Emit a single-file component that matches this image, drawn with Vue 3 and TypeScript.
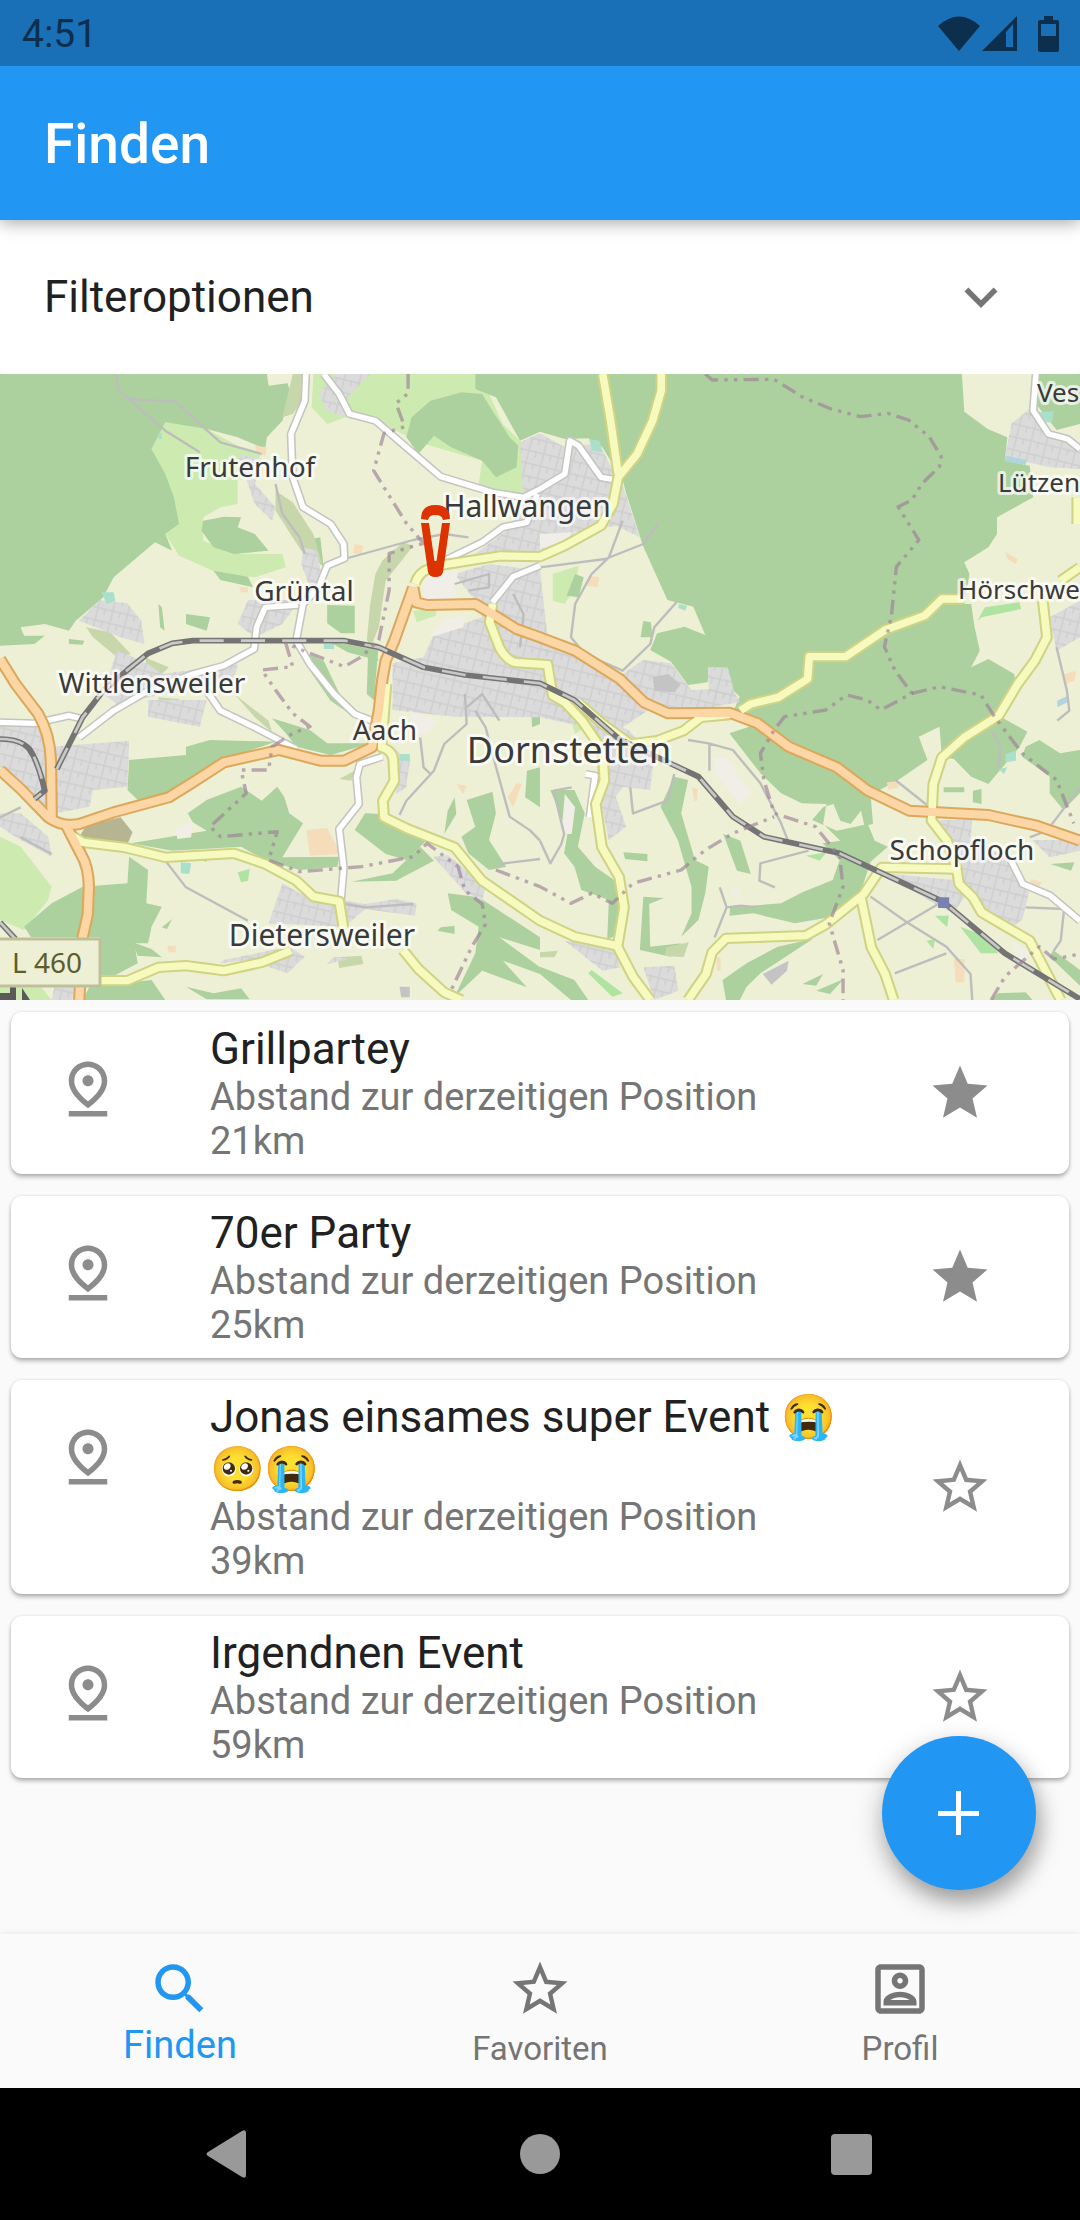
<script setup lang="ts">
import { ref } from 'vue'

interface EventItem {
  title: string
  distance: number
  favorite: boolean
}

interface Place {
  name: string
  x: number
  y: number
  size: number
  anchor: 'start' | 'middle'
}

const events = ref<EventItem[]>([
  { title: 'Grillpartey', distance: 21, favorite: true },
  { title: '70er Party', distance: 25, favorite: true },
  { title: 'Jonas einsames super Event 😭🥺😭', distance: 39, favorite: false },
  { title: 'Irgendnen Event', distance: 59, favorite: false },
])

const icons = {
  search:
    'M15.5 14h-.79l-.28-.27C15.41 12.59 16 11.11 16 9.5 16 5.91 13.09 3 9.5 3S3 5.91 3 9.5 5.91 16 9.5 16c1.61 0 3.09-.59 4.23-1.57l.27.28v.79l5 4.99L20.49 19l-4.99-5zm-6 0C7.01 14 5 11.99 5 9.5S7.01 5 9.5 5 14 7.01 14 9.5 11.99 14 9.5 14z',
  star: 'M12 17.27L18.18 21l-1.64-7.03L22 9.24l-7.19-.61L12 2 9.19 8.63 2 9.24l5.46 4.73L5.82 21z',
  starOutline:
    'M22 9.24l-7.19-.62L12 2 9.19 8.63 2 9.24l5.46 4.73L5.82 21 12 17.27 18.18 21l-1.63-7.03L22 9.24zM12 15.4l-3.76 2.27 1-4.28-3.32-2.88 4.38-.38L12 6.1l1.71 4.04 4.38.38-3.32 2.88 1 4.28L12 15.4z',
  account:
    'M19 3H5c-1.11 0-2 .9-2 2v14c0 1.1.89 2 2 2h14c1.1 0 2-.9 2-2V5c0-1.1-.9-2-2-2zm0 16H5V5h14v14zM12 12c1.65 0 3-1.35 3-3s-1.35-3-3-3-3 1.35-3 3 1.35 3 3 3zm0-4c.55 0 1 .45 1 1s-.45 1-1 1-1-.45-1-1 .45-1 1-1zm6 8.58c0-2.5-3.97-3.58-6-3.58s-6 1.08-6 3.58V18h12v-1.42zM8.48 16c.74-.51 2.23-1 3.52-1s2.78.49 3.52 1H8.48z',
  pinDrop:
    'M12 4c1.93 0 5 1.4 5 5.15 0 2.16-1.72 4.67-5 7.32-3.28-2.65-5-5.17-5-7.32C7 5.4 10.07 4 12 4m0-2C8.73 2 5 4.46 5 9.15c0 3.12 2.33 6.41 7 9.85 4.67-3.44 7-6.73 7-9.85C19 4.46 15.27 2 12 2zM12 7c-1.1 0-2 .9-2 2s.9 2 2 2 2-.9 2-2-.9-2-2-2zM5 20h14v2H5z',
}

const tabs = [
  { label: 'Finden', icon: icons.search, active: true },
  { label: 'Favoriten', icon: icons.starOutline, active: false },
  { label: 'Profil', icon: icons.account, active: false },
]

const places: Place[] = [
  { name: 'Frutenhof', x: 250, y: 103, size: 28, anchor: 'middle' },
  { name: 'Hallwangen', x: 527, y: 143, size: 30, anchor: 'middle' },
  { name: 'Grüntal', x: 304, y: 227, size: 28, anchor: 'middle' },
  { name: 'Wittlensweiler', x: 152, y: 319, size: 28, anchor: 'middle' },
  { name: 'Aach', x: 385, y: 366, size: 28, anchor: 'middle' },
  { name: 'Dornstetten', x: 569, y: 389, size: 36, anchor: 'middle' },
  { name: 'Dietersweiler', x: 322, y: 572, size: 30, anchor: 'middle' },
  { name: 'Schopfloch', x: 962, y: 486, size: 28, anchor: 'middle' },
  { name: 'Hörschwe', x: 958, y: 225, size: 26, anchor: 'start' },
  { name: 'Lützen', x: 998, y: 118, size: 26, anchor: 'start' },
  { name: 'Ves', x: 1037, y: 28, size: 26, anchor: 'start' },
]

/* Land cover outlines, in terrain units */
const meadow = [
  'M480 145L600 165 690 215 760 235 740 280 690 320 690 390 640 400 590 430 590 500 700 540 820 540 830 580 740 610 640 600 520 545 480 480 520 450 500 370 440 225Z',
  'M905 100L910 0H1380V40L1420 60 1460 150 1510 200 1540 310 1560 350 1500 365 1390 330 1400 260 1200 200 1180 185 1090 140 1015 125 950 150Z',
  'M0 1388L60 1418 150 1538 140 1578 70 1668 0 1638Z',
  'M1200 710L1270 700 1265 725 1210 745ZM1330 760L1350 750 1365 790 1335 800ZM1415 835L1440 830 1475 895 1440 890Z',
  'M0 1040L40 1060 90 1065 90 1090 0 1090ZM0 1840L120 1840 150 1878H0Z',
  'M940 1628H990V1655L950 1660Z',
  'M1605 600L1680 575 1670 640 1640 690 1605 680Z',
  'M1655 1030L1680 1010 1700 1060 1670 1080Z',
]

const scrub = [
  'M850 0H900L880 80 850 120 820 130Z',
  'M800 350L850 385 910 480 935 570 875 530 800 410Z',
  'M250 760L320 775 380 840 340 850 270 790ZM420 850L490 880 470 900 430 885Z',
  'M1090 600L1110 560 1170 505 1200 515 1120 620 1100 760 1080 810 1065 800 1075 690Z',
  'M460 970L520 975 520 1005 465 1000ZM980 1750L1050 1745 1055 1770 985 1782Z',
  'M680 960L780 1040 790 1075 740 1030ZM985 1215L1030 1190 1020 1220Z',
  'M1935 1720L2000 1705 1985 1750 1930 1745ZM1568 1735L1620 1730 1610 1750 1568 1750Z',
]

const forest = [
  'M0 0H775L780 35 835 28 845 60 820 140 775 190 770 225 690 190 600 165 480 145 440 225 480 300 505 370 520 450 480 480 500 530 450 505 330 610 300 670 220 740 200 770 130 750 60 760 70 785 130 785 100 810 0 815Z',
  'M590 440L650 428 700 430 690 460 740 480 780 530 680 540 620 520 585 470Z',
  'M1195 130L1250 80 1340 55 1400 60 1430 110 1480 190 1505 215 1500 280 1440 310 1400 260 1310 220 1260 185 1215 240 1180 190Z',
  'M1380 0H2793L2800 113 2868 165 2925 190 2918 260 2990 275 3000 370 2895 430 2895 480 2870 520 2800 565 2815 600 2800 690 2820 690 2830 760 2845 830 2820 880 2870 855 2945 900 2950 930 2900 1025 2983 1073 2960 1120 2870 1230 2820 1208 2770 1155 2735 1150 2728 1058 2668 1088 2693 1158 2608 1218 2528 1263 2420 1170 2290 1118 2200 1048 2130 1010 2148 968 2128 948 2113 883 2058 883 2055 925 1998 933 1948 863 1888 828 1908 778 1988 758 2048 783 2013 698 1938 678 1868 518 1818 358 1808 318 1748 218 1708 193 1640 195 1568 173 1510 200 1440 70 1380 45Z',
  'M2118 1078L2200 1050 2290 1128 2430 1185 2528 1263 2535 1350 2510 1355 2500 1310 2470 1350 2440 1340 2420 1290 2390 1300 2358 1338 2430 1370 2520 1350 2540 1400 2578 1418 2528 1463 2498 1558 2418 1628 2308 1648 2188 1618 2118 1625 2120 1600 2268 1588 2330 1555 2418 1518 2438 1458 2388 1408 2440 1400 2390 1350 2400 1290 2328 1288 2268 1258 2208 1198Z',
  'M540 1118L610 1098 800 1103 650 1158 560 1218 490 1263 400 1278 370 1248 375 1158 540 1143Z',
  'M545 1318L600 1278 700 1238 760 1280 805 1238 825 1268 840 1318 880 1348 820 1450 985 1448 980 1478 870 1488 770 1458 700 1418 500 1430 380 1408 600 1370 560 1345Z',
  'M375 1448L430 1488 425 1588 470 1598 440 1658 430 1708 390 1708 400 1768 290 1828V1690H90L70 1658 150 1588 240 1538 370 1528Z',
  'M1030 1368L1060 1318 1110 1320 1160 1358 1240 1398 1180 1458 1120 1440Z',
  'M1020 1523L1140 1498 1220 1418 1260 1460 1150 1520Z',
  'M1355 1278L1430 1253 1440 1318 1420 1398 1470 1478 1420 1488 1360 1438 1340 1388 1380 1358Z',
  'M1300 1558L1390 1570 1450 1610 1568 1690V1728L1450 1690 1568 1780V1800L1460 1760 1530 1840 1400 1790 1320 1868 1380 1738 1390 1658 1310 1608Z',
  'M790 1033L900 1068 950 1108 1080 1108 960 1143 860 1118 830 1078Z',
  'M260 1838L440 1818 480 1878H240ZM540 1838L620 1858 700 1843 725 1876H600ZM385 1705L440 1725 470 1750 400 1745Z',
  'M950 693L1030 695V778L990 778 950 748Z',
  'M620 590L720 608 735 640 640 618ZM540 720L610 730 600 770 540 750ZM460 690L470 700 478 770 465 760ZM200 795L245 800 240 812 200 810Z',
  'M870 830L940 860 1000 990 1060 1030 1030 1030 960 980 900 890ZM1070 800L1100 810 1090 930 1110 1000 1065 960Z',
  'M880 500L930 490 940 580 900 540ZM950 800L1080 825 1100 860 1010 835Z',
  'M1598 1248L1668 1248 1698 1318 1678 1418 1728 1478 1783 1518 1800 1600 1798 1678 1763 1698 1768 1578 1688 1548 1668 1478 1638 1438 1648 1378Z',
  'M1958 1208L1998 1218 1978 1318 2018 1458 2058 1478 2048 1558 2028 1638 1978 1688 2008 1618 2008 1538 1968 1398 1918 1298Z',
  'M1868 1568L1928 1572 1885 1590 1888 1718 1978 1708 1948 1748 1858 1728Z',
  'M1810 1435L1880 1440V1462L1815 1455Z',
  'M2108 1878L2098 1818 2168 1768 2258 1718 2360 1695 2208 1798 2168 1838 2148 1878Z',
  'M2978 1118L3018 1098 3078 1138 3136 1128V1258L3088 1308 3048 1258V1208L2968 1148Z',
  'M3058 1728L3136 1788V1835L3048 1748ZM2898 1858L2978 1855 2998 1878H2878Z',
  'M1568 1778L1668 1818 1708 1878H1658L1568 1800ZM1540 960L1568 970V1050L1545 1060ZM1530 1190L1568 1180V1300L1525 1270Z',
  'M3008 0H3136V150L3068 168 3008 90ZM1868 740L1890 745 1895 790 1860 790ZM1670 600L1695 610 1680 670 1645 665Z',
  'M2100 1380L2150 1400 2180 1500 2140 1490ZM2740 1240H2800V1255H2740ZM2825 1250L2850 1245V1290L2825 1285ZM3050 1470L3120 1465 3110 1490Z',
  'M2330 1830L2390 1800 2370 1835ZM2370 1850L2450 1815 2410 1860ZM1280 1660L1320 1655 1320 1680 1270 1670ZM470 1660L500 1635 485 1665ZM1320 1270L1325 1320 1290 1380 1300 1310Z',
]

const park = [
  'M1718 1788L1808 1858 1778 1868 1708 1798ZM2788 1658L2868 1688 2898 1738 2848 1738ZM2715 1625L2755 1625 2750 1660ZM2690 1700L2715 1695 2710 1725Z',
  'M2860 700L2960 685 2965 705 2850 730 2838 740ZM690 1495L725 1485 720 1520 700 1525ZM2340 1445L2400 1435 2380 1460Z',
]

const town = [
  'M975 0H1075L1010 70 1000 130 950 110 925 60Z',
  'M690 240L760 255 740 330 800 400 790 440 740 390Z',
  'M880 520L920 530 940 640 900 640 875 570ZM720 678L870 678 820 750 740 790 690 750Z',
  'M290 678L370 688 410 740 420 810 350 790 230 740Z',
  'M340 828L430 870 470 900 690 870 680 920 430 970 340 990 300 960ZM430 978H600L580 1058 430 1028Z',
  'M0 1060L110 1048 150 1118 375 1100 370 1238 270 1248 260 1298 160 1318 100 1268 0 1178Z',
  'M0 1318H60L140 1388 150 1448 60 1398 0 1358Z',
  'M1320 600L1420 570 1568 590 1600 880 1700 1060 1568 1030 1320 1028 1140 1008 1140 868 1230 850 1260 780 1400 730 1380 680Z',
  'M1510 205L1568 178 1640 220 1740 208 1780 290 1810 340 1838 430 1858 490 1790 455 1668 475 1660 490 1568 530 1380 540 1470 470 1520 390Z',
  'M1568 790L1668 820 1808 900 1868 858 1948 868 2008 948 2128 945 2148 985 1980 1015 1898 998 1808 1060 1828 1070 1898 1158 1888 1248 1808 1238 1788 1268 1818 1358 1768 1398 1738 1248 1728 1080 1600 1000Z',
  'M2055 880H2113L2135 965 2060 980Z',
  'M820 1528L870 1558 1060 1590 1150 1575 1210 1588 1205 1625 1060 1605 1000 1658 780 1648Z',
  'M650 1758L840 1718 885 1748 835 1798 720 1758 640 1768ZM970 1748L1010 1755 950 1770Z',
  'M2718 1338H2823L2818 1398 2938 1458 2968 1518 2988 1558 2968 1638 2938 1658 2848 1608 2808 1558 2768 1618 2728 1598 2568 1498 2768 1518Z',
  'M2998 1398H3136V1430L3048 1450Z',
  'M2938 148L2998 98 3048 178 3136 210V285L3048 280 2918 250Z',
  'M3048 730L3136 680V790L3068 830Z',
  'M1258 1448L1300 1443 1410 1538 1400 1580 1350 1555Z',
  'M1140 1120L1190 1160 1180 1240 1150 1260ZM1868 1780L1958 1775 1970 1850 1900 1878Z',
  'M1640 1700L1790 1725 1800 1780 1750 1790ZM160 1830L215 1830 210 1878H150Z',
]

const industry = [
  'M1895 910L1940 900 1975 930 1960 955 1900 950Z',
  'M2215 1800L2290 1760 2285 1790 2240 1832ZM1160 1838H1190V1870H1165Z',
]

const bare = [
  'M1225 600L1330 590 1320 670 1230 680ZM1290 735L1350 725 1345 760 1250 790ZM2068 1155L2110 1150 2180 1260 2150 1290 2080 1200Z',
  'M510 1365L560 1345 555 1390 515 1395ZM1640 1260L1670 1300 1660 1380 1630 1380ZM2120 1540L2150 1545 2140 1580ZM2940 1700L2990 1740 2960 1770ZM1568 480L1660 475 1650 500 1568 525ZM1190 1010L1270 1040 1240 1080 1200 1080Z',
]

const farmyard = [
  'M890 1368L950 1362 990 1440 900 1445ZM1500 1228L1515 1230 1490 1300 1475 1270ZM740 215L775 220 770 245 745 235ZM1030 510L1055 515 1050 540 1025 538ZM1710 605L1740 610 1735 640 1705 635Z',
  'M2920 535L2955 555 2950 570 2925 555ZM3090 900L3125 890 3120 920 3095 930ZM2770 1755L2800 1755V1825H2775ZM2575 1225L2605 1222 2610 1240 2580 1248ZM2995 1515L3025 1525 3015 1540 2990 1535ZM485 1715L510 1715 510 1735 490 1735ZM695 640H720V655H700ZM2010 1240L2025 1245 2025 1280 2015 1280ZM1325 1230L1355 1235 1345 1260ZM2080 1750H2092V1790H2082Z',
]

const water = [
  'M295 655L330 655 335 680 310 690ZM525 1465L555 1468 550 1500 525 1498ZM1160 1140H1190V1160H1160ZM1710 195L1740 200 1750 235 1720 230ZM3015 115L3060 112 3055 145 3030 145ZM2920 1140L2950 1130 2950 1160 2920 1165ZM2900 1185L2925 1180 2915 1200Z',
  'M1970 690L1995 695 1990 710 1970 702ZM940 810H970V825H940ZM460 178H470V195H460Z',
]

/* Line work, in terrain units */
const tracks = [
  'M335 0L345 50 480 170 580 235M370 75L510 83 580 150 640 205 760 240M800 330L820 420 870 490 885 540M1000 555L1200 498 1290 480 1360 490',
  'M1808 440L1768 550 1718 600 1670 690 1658 790 1698 840 1808 890 1888 810 1900 760 1968 680M1910 450L1868 510 1758 555 1568 580',
  'M480 1460L540 1540 720 1640M1350 960L1355 1050 1290 1110 1260 1190 1180 1280 1160 1323M1220 1090L1230 1180 1250 1200M1380 1010L1410 1060 1440 1178 1480 1328 1540 1370 1568 1400M1355 1000L1400 960 1450 1040',
  'M1568 1400L1598 1468 1630 1410 1638 1380 1608 1250 1660 1240M1830 1240L1838 1318 1938 1280 1958 1200M1998 1098L2058 1108 2128 1128 2208 1228 2268 1348 2288 1400M2060 1110V1190',
  'M2348 1430L2208 1468 2205 1520 2250 1540M2090 1540L2110 1600 2150 1595 2200 1600M2110 1600L2075 1690M2528 1568L2638 1648 2748 1718 2818 1800 2823 1878M2728 1588L2548 1698M2748 1738L2598 1798',
  'M2978 1600L3090 1605 3080 1700 3060 1730M2600 1218L2700 1300M2880 1070L2905 1120 2900 1180M3068 820L3098 950 3105 1010 3070 1040M3136 1240L3040 1370 2990 1390',
  'M0 1330L60 1300M60 1390L150 1440M1000 1590L1060 1600 1200 1590M1320 630L1420 600 1420 640 1360 650M1490 660L1520 720 1510 820M540 1440L600 1460M1450 1470L1568 1455',
]

const borders = [
  'M2048 0L2068 18 2248 16 2328 68 2408 103 2498 128 2578 118 2638 138 2698 188 2733 248 2728 278 2678 328 2648 378 2608 398 2668 498 2603 578 2588 728 2568 818 2598 888 2648 958 2558 1008 2518 978 2458 963 2398 1008 2278 1028 2248 1068 2208 1138 2218 1218 2248 1318 2368 1358 2438 1448 2448 1538 2408 1648 2448 1788 2448 1878',
  'M2648 958L2728 938 2848 963 2888 1028 2968 1138 3068 1218 3118 1348',
  'M1185 0V58L1150 88 1175 158 1115 178 1085 290 1180 448 1230 508 1130 538V648L1100 798 1050 848 1000 878 900 838 830 808 850 878 760 888 800 948 850 1018 900 1058 850 1078 790 1118 780 1188 700 1188 715 1258 610 1358 640 1388 805 1373 780 1458 870 1493 1050 1478 1200 1448 1240 1408 1330 1478 1350 1550 1400 1590 1410 1650 1370 1718 1310 1848',
  'M1440 1488L1568 1538 1658 1588 1718 1558 1778 1588 1838 1528 1978 1488 2048 1428 2128 1378 2248 1328',
  'M2878 1878L2918 1808 3018 1718 3060 1755 3136 1740',
]

const whiteRoads = [
  'M888 0L885 80 845 180 850 310 880 400 960 450 998 510 1000 553 950 575 925 640 880 690 860 800 900 870 970 960 1030 1020 1080 1040',
  'M940 0L985 60 1015 120 1090 140 1180 220 1280 308 1430 355 1520 370 1568 345 1640 300 1655 200 1680 215 1745 310 1790 318',
  'M865 693L770 700 745 760 738 825 650 875 560 900 430 950 330 1010 230 1090',
  'M0 1045L100 1048 200 1025 240 1035M600 950L640 1010 740 1060 860 1125',
  'M1110 1148L1045 1170 1035 1210 1042 1290 985 1365 998 1480 990 1580',
  'M1290 560L1400 505 1460 460 1530 445 1560 360M1430 685L1490 608 1568 575',
  'M3008 0L3000 110 3045 180 3100 195 3136 225M2935 1458L2970 1530 3050 1565 3136 1640M1700 1200L1728 1205 1712 1330',
]

const yellowRoads = [
  'M1205 630Q1215 595 1245 585L1290 572 1450 546 1568 548 1640 515 1745 455 1780 390 1795 310 1850 240 1895 140 1920 50V0M1750 0L1773 140 1795 300',
  'M1430 690L1422 745 1450 820Q1470 860 1500 866L1590 872 1605 965 1640 985 1690 1040 1750 1130 1755 1220 1730 1290 1748 1420 1798 1510 1812 1600 1793 1718 1838 1808 1888 1878',
  'M1678 985L1750 1050 1830 1110 1908 1100 1985 1070 2035 1030 2120 1022M2150 1010L2180 990 2260 970 2345 915 2350 848H2455L2570 768 2685 725 2735 675H2800',
  'M3080 620L3136 580M3028 680L3040 790 3005 860 2955 930 2900 1025 2800 1090 2735 1150 2710 1230 2705 1340 2750 1400 2778 1485 2785 1530 2825 1570 2850 1615 2990 1700 3080 1878',
  'M2778 1485L2560 1480 2508 1560 2400 1650 2340 1685 2108 1693 2068 1735 2050 1800 1998 1878M2500 1570L2530 1720 2570 1800 2595 1878',
  'M200 1378L240 1405 360 1420 480 1450 680 1438 770 1470 860 1520 910 1568 985 1582 998 1665M290 1820H370L460 1780 540 1775 650 1790 760 1765 845 1730M1170 1728L1215 1785 1290 1855 1340 1878',
  'M1122 930L1108 1120Q1140 1130 1142 1158L1145 1220 1112 1280 1115 1330 1180 1363 1320 1420 1400 1520 1568 1640 1668 1688 1790 1715M3128 370V450',
]

const orangeRoads = [
  'M0 855L45 930 110 1018Q145 1080 148 1160L150 1330',
  'M0 1188L60 1245 140 1330Q180 1360 230 1350L330 1315 490 1270 560 1225 650 1165 810 1128 930 1160H1000L1080 1120 1100 1010 1110 918 1120 860 1145 800 1200 640',
  'M190 1350L235 1440Q258 1480 258 1540L255 1620 240 1690 230 1878',
  'M1200 640L1208 685 1240 693 1380 690 1430 720 1500 765 1568 790 1670 830 1800 915 1870 985 1940 1018 2118 1016 2200 1048 2290 1118 2430 1180 2520 1250 2640 1310 2870 1323 3010 1355 3136 1400',
]

const railway = [
  'M165 1185L240 1030 300 950 370 888 430 838 500 808 560 800H1000L1100 820 1230 880 1350 903 1568 928 1668 978 1798 1095 1950 1170 2028 1208 2128 1328 2218 1388 2438 1438 2738 1583 2918 1738 3136 1875',
  'M0 1095Q60 1095 85 1125 110 1160 130 1250L100 1275M0 1645L45 1695',
]

function toggleFavorite(item: EventItem): void {
  item.favorite = !item.favorite
}
</script>

<template>
  <div class="screen">
    <header class="top">
      <div class="status">
        <span>4:51</span>
        <svg class="status-icons" viewBox="0 0 122 36" aria-hidden="true">
          <path d="M0 10Q21-9 42 10L21 35Z" />
          <path fill-rule="evenodd" d="M44 35L79 0V35ZM68 16L75 8V31H68Z" />
          <path
            fill-rule="evenodd"
            d="M106 0h9v4h4q2 0 2 2v28q0 2-2 2h-17q-2 0-2-2v-28q0-2 2-2h4ZM103 8v12h15V8Z"
          />
        </svg>
      </div>
      <div class="app-bar"><h1>Finden</h1></div>
    </header>

    <main class="content">
      <button class="filter" type="button" aria-expanded="false">
        <span>Filteroptionen</span>
        <svg class="icon" viewBox="0 0 24 24" aria-hidden="true">
          <path d="M16.59 8.59L12 13.17 7.41 8.59 6 10l6 6 6-6z" />
        </svg>
      </button>

      <svg class="map" viewBox="0 0 1080 626" role="img" aria-label="Karte">
        <svg width="1080" height="626" viewBox="0 0 3136 1878" preserveAspectRatio="none">
          <defs>
            <pattern id="streets" width="44" height="38" patternUnits="userSpaceOnUse" patternTransform="rotate(14)">
              <path d="M0 3H44M6 3V38M28 0V20" fill="none" stroke="#cecece" stroke-width="4" />
            </pattern>
          </defs>
          <rect width="3136" height="1878" fill="#edf0d5" />
          <path v-for="d in meadow" :key="d" :d="d" fill="#cdebb0" />
          <path v-for="d in forest" :key="d" :d="d" fill="#add19e" />
          <path v-for="d in scrub" :key="d" :d="d" fill="#c8d7ab" />
          <path v-for="d in park" :key="d" :d="d" fill="#aee3a1" />
          <path v-for="d in town" :key="d" :d="d" fill="#dbdbdb" />
          <path v-for="d in town" :key="'s' + d" :d="d" fill="url(#streets)" />
          <path v-for="d in industry" :key="d" :d="d" fill="#c4c4c4" />
          <path v-for="d in bare" :key="d" :d="d" fill="#f1eee8" />
          <path v-for="d in farmyard" :key="d" :d="d" fill="#f5dcba" />
          <path v-for="d in water" :key="d" :d="d" fill="#aae0cb" />
          <path d="M230 1388L250 1355 350 1330 385 1375 370 1410Z" fill="#b6b592" />
          <path d="M2920 245L2980 258 2978 273 2918 262ZM3070 980L3100 965 3100 985 3070 1000Z" fill="#b0d5df" />

          <g class="line">
            <path v-for="d in tracks" :key="d" :d="d" stroke="#bdbdbd" stroke-width="7" />
            <path v-for="d in whiteRoads" :key="'c' + d" :d="d" stroke="#c4c4c0" stroke-width="25" />
            <path v-for="d in whiteRoads" :key="d" :d="d" stroke="#ffffff" stroke-width="16" />
            <path v-for="d in yellowRoads" :key="'c' + d" :d="d" stroke="#cfd383" stroke-width="34" />
            <path v-for="d in orangeRoads" :key="'c' + d" :d="d" stroke="#dba85c" stroke-width="36" />
            <path v-for="d in yellowRoads" :key="d" :d="d" stroke="#f7fabf" stroke-width="22" />
            <path v-for="d in orangeRoads" :key="d" :d="d" stroke="#fcd6a4" stroke-width="24" />
            <path v-for="d in railway" :key="'c' + d" :d="d" stroke="#747474" stroke-width="17" />
            <path v-for="d in railway" :key="d" :d="d" class="sleepers" />
            <path v-for="d in borders" :key="d" :d="d" class="border" />
          </g>
          <rect x="2724" y="1570" width="32" height="32" fill="#7981b0" />
        </svg>

        <text
          v-for="place in places"
          :key="place.name"
          class="place"
          :x="place.x"
          :y="place.y"
          :font-size="place.size"
          :text-anchor="place.anchor"
        >{{ place.name }}</text>

        <path d="M0 619h10v-8h6v15H0zM22 614l8 12h-8z" fill="#5a5a5a" />
        <rect x="-4" y="565" width="104" height="47" rx="1" fill="#edf0d5" stroke="#bfc09a" stroke-width="3" />
        <text class="shield" x="12" y="599">L 460</text>

        <g fill="#dd3300">
          <path d="M421 145Q421 131 435.500 131 450 131 450 145L443 146Q442 141 435.500 141 429 141 428 146Z" />
          <path d="M421 149H429L434.500 187H436.500L442 149H450L443 198Q442 203 435.500 203 429 203 428 198Z" />
        </g>
      </svg>

      <ul class="events">
        <li v-for="item in events" :key="item.title" class="card">
          <svg class="icon pin" viewBox="0 0 24 24" aria-hidden="true"><path :d="icons.pinDrop" /></svg>
          <div>
            <h2>{{ item.title }}</h2>
            <p>Abstand zur derzeitigen Position {{ item.distance }}km</p>
          </div>
          <button
            class="favorite"
            type="button"
            aria-label="Favorit"
            :aria-pressed="item.favorite"
            @click="toggleFavorite(item)"
          >
            <svg class="icon" viewBox="0 0 24 24" aria-hidden="true">
              <path :d="item.favorite ? icons.star : icons.starOutline" />
            </svg>
          </button>
        </li>
      </ul>

      <button class="fab" type="button" aria-label="Event hinzufügen">
        <svg viewBox="0 0 44 44" aria-hidden="true"><path d="M19 0h5v20h18v5H24v19h-5V25H1v-5h18z" /></svg>
      </button>
    </main>

    <nav class="tabs">
      <a v-for="tab in tabs" :key="tab.label" href="#" :class="{ active: tab.active }">
        <svg class="icon" viewBox="0 0 24 24" aria-hidden="true"><path :d="tab.icon" /></svg>
        <span>{{ tab.label }}</span>
      </a>
    </nav>

    <div class="system">
      <button type="button" aria-label="Zurück">
        <svg viewBox="0 0 48 48"><path d="M39 1q4-2 4 2v42q0 4-4 2L5 26q-3-2 0-4z" /></svg>
      </button>
      <button type="button" aria-label="Startbildschirm">
        <svg viewBox="0 0 48 48"><circle cx="24" cy="24" r="20" /></svg>
      </button>
      <button type="button" aria-label="Übersicht">
        <svg viewBox="0 0 48 48"><rect x="2" y="4" width="41" height="41" rx="4" /></svg>
      </button>
    </div>
  </div>
</template>

<style>
body {
  margin: 0;
  background: #fafafa;
}
</style>

<style scoped>
.screen {
  display: flex;
  flex-direction: column;
  min-height: 100vh;
  background: #fafafa;
  color: #212121;
  font-family: Roboto, "Noto Color Emoji", sans-serif;
}

button {
  margin: 0;
  padding: 0;
  border: 0;
  background: none;
  color: inherit;
  font: inherit;
  cursor: pointer;
}

svg {
  display: block;
}

.icon {
  width: 66px;
  height: 66px;
  fill: currentColor;
}

.top {
  position: relative;
  z-index: 1;
  background: #2196f3;
  box-shadow: 0 3px 16px rgba(0, 0, 0, 0.35);
}

.status {
  display: flex;
  align-items: center;
  justify-content: space-between;
  box-sizing: border-box;
  height: 66px;
  padding: 2px 20px 0 22px;
  background: #1a70b7;
  color: #0b2f4c;
  font-size: 39px;
}

.status-icons {
  width: 122px;
  height: 36px;
  fill: currentColor;
}

.app-bar {
  display: flex;
  align-items: center;
  box-sizing: border-box;
  height: 154px;
  padding: 2px 44px 0;
}

h1 {
  margin: 0;
  color: #fff;
  font-size: 55px;
  font-weight: 500;
  line-height: 66px;
}

.content {
  position: relative;
  flex: 1;
}

.filter {
  display: flex;
  align-items: center;
  justify-content: space-between;
  width: 100%;
  height: 154px;
  padding: 0 66px 0 44px;
  border-radius: 6px;
  background: #fff;
  font-size: 44px;
}

.filter .icon {
  color: #757575;
}

.map {
  width: 100%;
  height: auto;
  overflow: hidden;
}

.line {
  fill: none;
  stroke-linejoin: round;
}

.sleepers {
  stroke: #c9c9c5;
  stroke-width: 8px;
  stroke-dasharray: 70 50;
}

.border {
  stroke: #9c7f98;
  stroke-width: 10px;
  stroke-dasharray: 44 18 10 18 10 18;
  opacity: 0.65;
}

.place {
  fill: #3a3a3a;
  stroke: rgba(255, 255, 255, 0.7);
  stroke-width: 6px;
  stroke-linejoin: round;
  paint-order: stroke;
  font-family: "Noto Sans", sans-serif;
}

.shield {
  fill: #5e5d2c;
  font-family: "Noto Sans", sans-serif;
  font-size: 28px;
}

.events {
  display: flex;
  flex-direction: column;
  gap: 22px;
  margin: 0;
  padding: 12px 11px;
  list-style: none;
}

.card {
  display: grid;
  grid-template-columns: 199px 1fr 219px;
  padding: 11px 0;
  border-radius: 11px;
  background: #fff;
  box-shadow: 0 3px 4px rgba(0, 0, 0, 0.28), 0 0 3px rgba(0, 0, 0, 0.1);
}

.pin {
  margin: 33px 0 0 44px;
  color: #8c8c8c;
}

h2 {
  margin: 0;
  font-size: 44px;
  font-weight: 400;
  line-height: 52px;
}

p {
  margin: 0;
  color: #757575;
  font-size: 38px;
  line-height: 44px;
}

.favorite {
  align-self: center;
  justify-self: center;
  color: #8c8c8c;
}

.fab {
  position: absolute;
  right: 44px;
  bottom: 44px;
  display: grid;
  place-items: center;
  width: 154px;
  height: 154px;
  border-radius: 50%;
  background: #2196f3;
  box-shadow: 0 10px 28px rgba(0, 0, 0, 0.28), 6px 12px 18px rgba(0, 0, 0, 0.16);
}

.fab svg {
  width: 44px;
  height: 44px;
  fill: #fff;
}

.tabs {
  position: relative;
  display: flex;
  height: 154px;
  background: #fafafa;
  box-shadow: 0 -1px 6px rgba(0, 0, 0, 0.08);
}

.tabs a {
  display: flex;
  flex: 1;
  flex-direction: column;
  align-items: center;
  padding-top: 22px;
  color: #757575;
  font-size: 33px;
  line-height: 39px;
  text-decoration: none;
}

.tabs span {
  display: flex;
  align-items: flex-end;
  height: 46px;
}

.tabs .active {
  color: #2196f3;
  font-size: 38px;
  line-height: 46px;
}

.system {
  display: flex;
  justify-content: center;
  height: 132px;
  background: #000;
}

.system button {
  display: grid;
  flex: 0 0 29%;
  place-items: center;
}

.system svg {
  width: 48px;
  height: 48px;
  fill: #999;
}
</style>
